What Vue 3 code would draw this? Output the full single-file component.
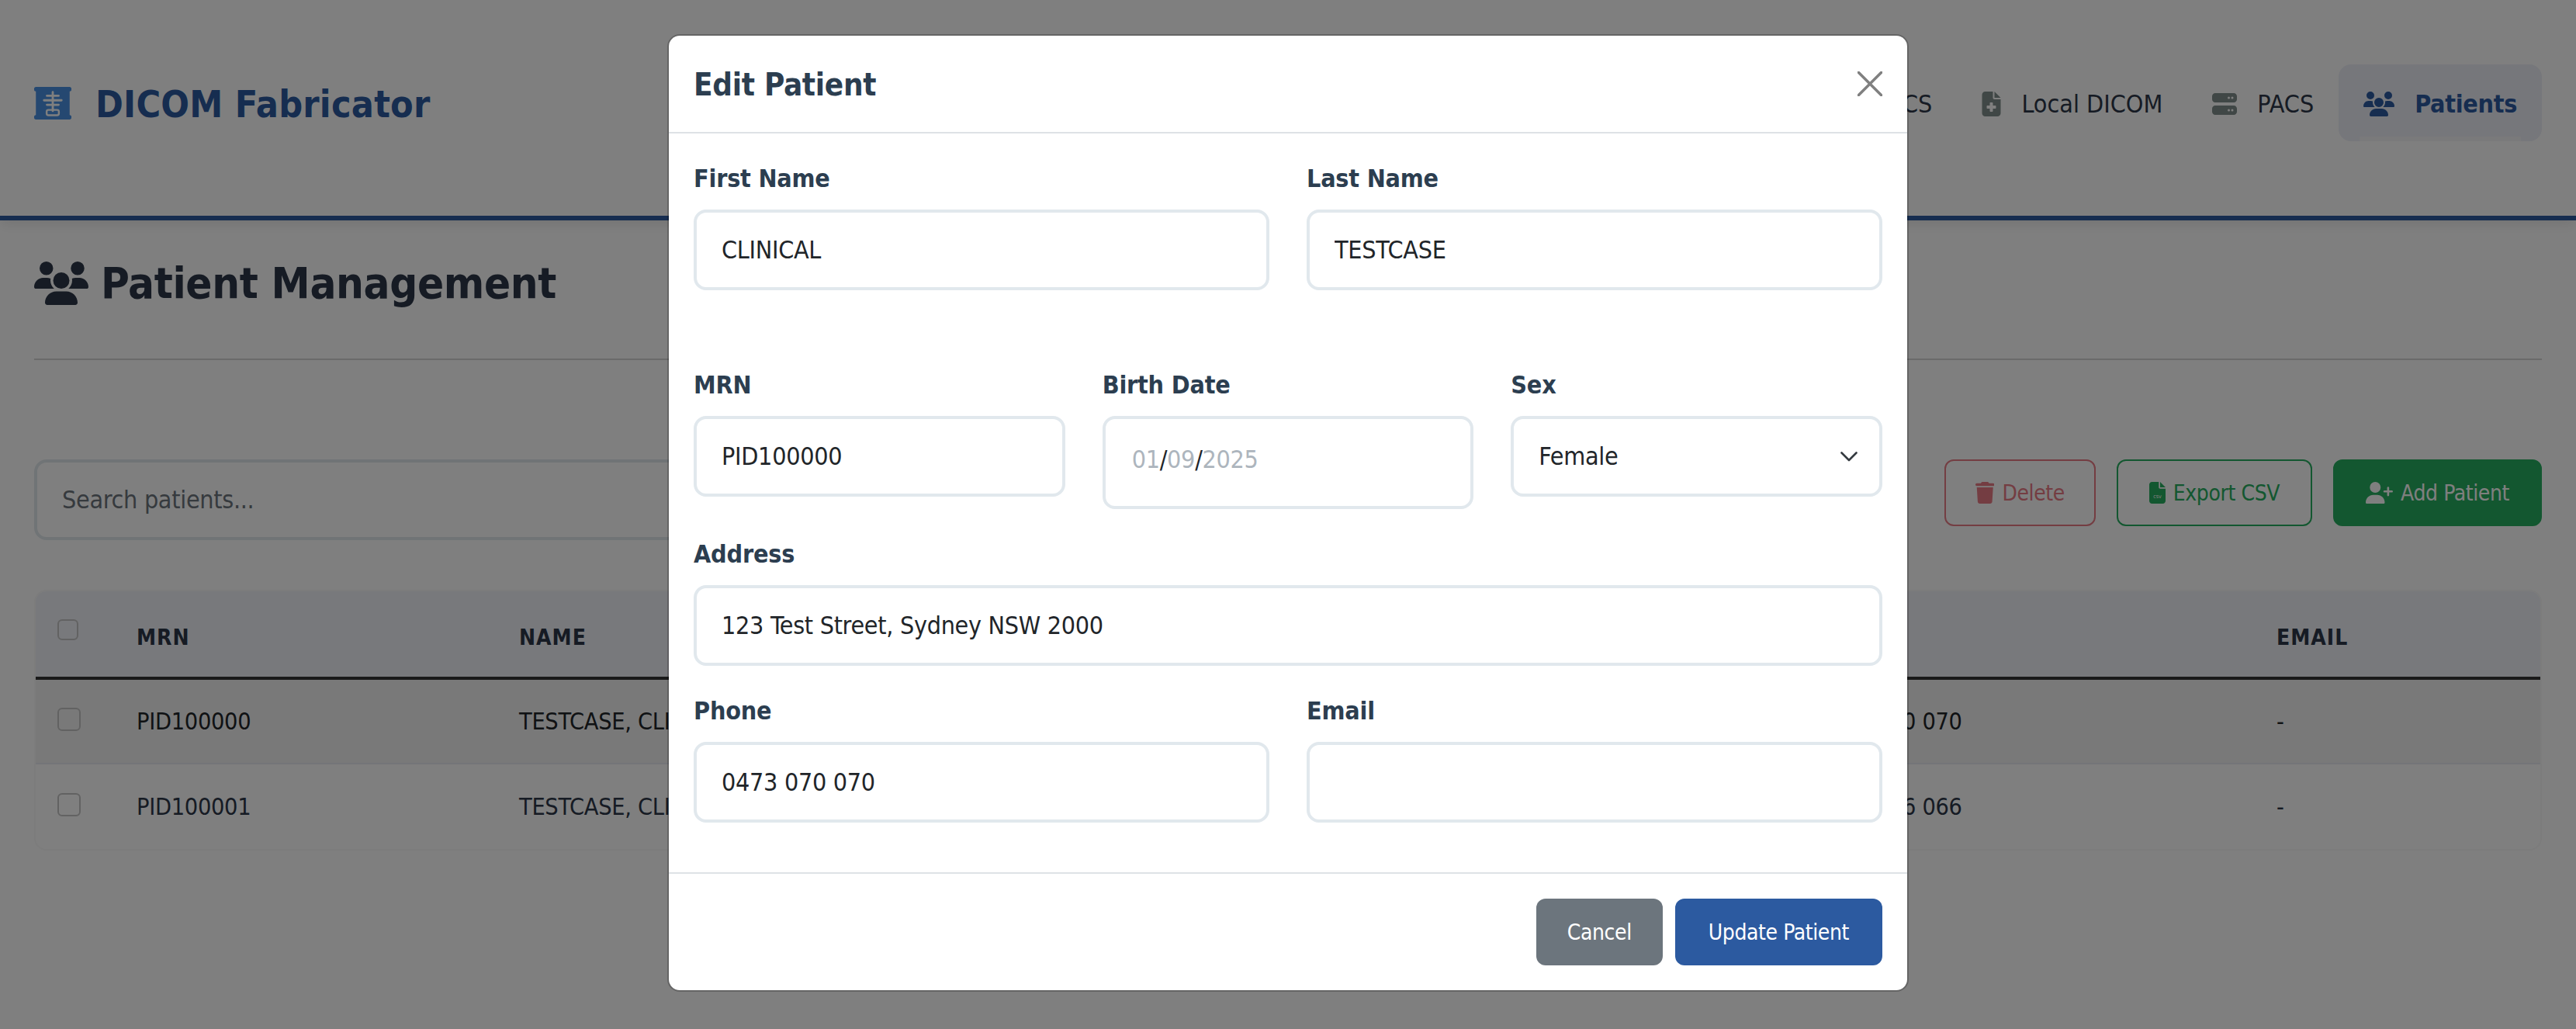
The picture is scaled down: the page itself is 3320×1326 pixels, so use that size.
<template>
  <div class="page">
    <!-- 顶部导航 -->
    <header class="navbar">
      <div class="brand">
        <svg class="brand-icon" viewBox="0 0 512 448">
          <path d="M0 24C0 10 10 0 24 0H488c14 0 24 10 24 24V40c0 12-8 20-24 22V386c16 2 24 10 24 22v16c0 14-10 24-24 24H24C10 448 0 438 0 424V408c0-12 8-20 24-22V62C8 60 0 52 0 40Z" />
          <path class="xray-bone" d="M256 72V330M176 122H336M136 184H376M176 246H336" />
          <path class="xray-bone thin" d="M196 316H316C330 316 340 326 340 340V366C340 380 330 390 316 390H196C182 390 172 380 172 366V340C172 326 182 316 196 316Z" />
        </svg>
        <span class="brand-name">DICOM Fabricator</span>
      </div>
      <nav class="nav-links">
        <a class="nav-link">Query PACS</a>
        <a class="nav-link">
          <svg class="nav-icon file" viewBox="0 0 384 512"><path :d="ICONS.fileMedical" /></svg>
          Local DICOM
        </a>
        <a class="nav-link">
          <svg class="nav-icon server" viewBox="0 0 512 512"><path :d="ICONS.server" /></svg>
          PACS
        </a>
        <a class="nav-link active">
          <svg class="nav-icon users" viewBox="0 0 640 512"><path :d="ICONS.users" /></svg>
          Patients
        </a>
      </nav>
    </header>

    <main class="content">
      <div class="page-head">
        <svg class="title-icon" viewBox="0 0 640 512"><path :d="ICONS.users" /></svg>
        <h1>Patient Management</h1>
      </div>

      <div class="toolbar">
        <input class="search" placeholder="Search patients..." />
        <div class="actions">
          <button class="btn btn-delete">
            <svg class="btn-icon" viewBox="0 0 448 512"><path :d="ICONS.trash" /></svg>
            Delete
          </button>
          <button class="btn btn-export">
            <svg class="btn-icon" viewBox="0 0 384 512">
              <path :d="ICONS.file" />
              <text x="192" y="390" class="csv-mark">csv</text>
            </svg>
            Export CSV
          </button>
          <button class="btn btn-add">
            <svg class="btn-icon" viewBox="0 0 640 512"><path :d="ICONS.userPlus" /></svg>
            Add Patient
          </button>
        </div>
      </div>

      <div class="table-wrap">
        <table>
          <colgroup>
            <col class="c-check" /><col class="c-mrn" /><col class="c-name" />
            <col class="c-dob" /><col class="c-sex" /><col class="c-phone" /><col />
          </colgroup>
          <thead>
            <tr>
              <th><input type="checkbox" class="check head-check" /></th>
              <th>MRN</th>
              <th>Name</th>
              <th>Birth Date</th>
              <th>Sex</th>
              <th>Phone</th>
              <th>Email</th>
            </tr>
          </thead>
          <tbody>
            <tr v-for="row in patients" :key="row.mrn">
              <td><input type="checkbox" class="check" /></td>
              <td>{{ row.mrn }}</td>
              <td>{{ row.name }}</td>
              <td>01/09/2025</td>
              <td>Female</td>
              <td>{{ row.phone }}</td>
              <td>-</td>
            </tr>
          </tbody>
        </table>
      </div>
    </main>

    <!-- 编辑弹窗 -->
    <div class="overlay">
      <div class="modal">
        <div class="modal-header">
          <h2>Edit Patient</h2>
          <svg class="close" viewBox="0 0 32 32"><path d="M1 1L31 31M31 1L1 31" /></svg>
        </div>

        <div class="modal-body">
          <div class="form-row two first">
            <div class="group">
              <label>First Name</label>
              <input class="field" :value="form.firstName" />
            </div>
            <div class="group">
              <label>Last Name</label>
              <input class="field" :value="form.lastName" />
            </div>
          </div>

          <div class="form-row three">
            <div class="group">
              <label>MRN</label>
              <input class="field" :value="form.mrn" />
            </div>
            <div class="group">
              <label>Birth Date</label>
              <div class="field date">
                <span class="muted">01</span>/<span class="muted">09</span>/<span class="muted">2025</span>
              </div>
            </div>
            <div class="group">
              <label>Sex</label>
              <div class="select-box">
                <select class="field">
                  <option>Female</option>
                  <option>Male</option>
                </select>
                <svg class="chevron" viewBox="0 0 22 13"><path d="M1.5 1.5L11 11L20.5 1.5" /></svg>
              </div>
            </div>
          </div>

          <div class="group">
            <label>Address</label>
            <input class="field" :value="form.address" />
          </div>

          <div class="form-row two">
            <div class="group">
              <label>Phone</label>
              <input class="field" :value="form.phone" />
            </div>
            <div class="group">
              <label>Email</label>
              <input class="field" :value="form.email" />
            </div>
          </div>
        </div>

        <div class="modal-footer">
          <button class="btn btn-cancel">Cancel</button>
          <button class="btn btn-update">Update Patient</button>
        </div>
      </div>
    </div>
  </div>
</template>

<script setup>
import { reactive } from 'vue'

const ICONS = {
  users: 'M144 0a80 80 0 1 1 0 160A80 80 0 1 1 144 0zM512 0a80 80 0 1 1 0 160A80 80 0 1 1 512 0zM0 298.7C0 239.8 47.8 192 106.7 192h42.7c15.9 0 31 3.5 44.6 9.7c-1.3 7.2-1.9 14.7-1.9 22.3c0 38.2 16.8 72.5 43.3 96c-.2 0-.4 0-.7 0H21.3C9.6 320 0 310.4 0 298.7zM405.3 320c-.2 0-.4 0-.7 0c26.6-23.5 43.3-57.8 43.3-96c0-7.6-.7-15-1.9-22.3c13.6-6.3 28.7-9.7 44.6-9.7h42.7C592.2 192 640 239.8 640 298.7c0 11.8-9.6 21.3-21.3 21.3H405.3zM224 224a96 96 0 1 1 192 0 96 96 0 1 1 -192 0zM128 485.3C128 411.7 187.7 352 261.3 352H378.7C452.3 352 512 411.7 512 485.3c0 14.7-11.9 26.7-26.7 26.7H154.7c-14.7 0-26.7-11.9-26.7-26.7z',
  fileMedical: 'M64 0C28.7 0 0 28.7 0 64V448c0 35.3 28.7 64 64 64H320c35.3 0 64-28.7 64-64V160H256c-17.7 0-32-14.3-32-32V0H64zM256 0V128H384L256 0zM160 240c0-8.8 7.2-16 16-16h32c8.8 0 16 7.2 16 16v48h48c8.8 0 16 7.2 16 16v32c0 8.8-7.2 16-16 16H224v48c0 8.8-7.2 16-16 16H176c-8.8 0-16-7.2-16-16V352H112c-8.8 0-16-7.2-16-16V304c0-8.8 7.2-16 16-16h48V240z',
  server: 'M64 32C28.7 32 0 60.7 0 96v64c0 35.3 28.7 64 64 64H448c35.3 0 64-28.7 64-64V96c0-35.3-28.7-64-64-64H64zm280 72a24 24 0 1 1 0 48 24 24 0 1 1 0-48zm48 24a24 24 0 1 1 48 0 24 24 0 1 1 -48 0zM64 288c-35.3 0-64 28.7-64 64v64c0 35.3 28.7 64 64 64H448c35.3 0 64-28.7 64-64V352c0-35.3-28.7-64-64-64H64zm280 72a24 24 0 1 1 0 48 24 24 0 1 1 0-48zm48 24a24 24 0 1 1 48 0 24 24 0 1 1 -48 0z',
  trash: 'M135.2 17.7L128 32H32C14.3 32 0 46.3 0 64S14.3 96 32 96H416c17.7 0 32-14.3 32-32s-14.3-32-32-32H320l-7.2-14.3C307.4 6.8 296.3 0 284.2 0H163.8c-12.1 0-23.2 6.8-28.6 17.7zM416 128H32L53.2 467c1.6 25.3 22.6 45 47.9 45H346.9c25.3 0 46.3-19.7 47.9-45L416 128z',
  file: 'M64 0C28.7 0 0 28.7 0 64V448c0 35.3 28.7 64 64 64H320c35.3 0 64-28.7 64-64V160H256c-17.7 0-32-14.3-32-32V0H64zM256 0V128H384L256 0z',
  userPlus: 'M96 128a128 128 0 1 1 256 0A128 128 0 1 1 96 128zM0 482.3C0 383.8 79.8 304 178.3 304h91.4C368.2 304 448 383.8 448 482.3c0 16.4-13.3 29.7-29.7 29.7H29.7C13.3 512 0 498.7 0 482.3zM504 312V248H440c-13.3 0-24-10.7-24-24s10.7-24 24-24h64V136c0-13.3 10.7-24 24-24s24 10.7 24 24v64h64c13.3 0 24 10.7 24 24s-10.7 24-24 24H552v64c0 13.3-10.7 24-24 24s-24-10.7-24-24z',
}

const patients = [
  { mrn: 'PID100000', name: 'TESTCASE, CLINICAL', phone: '0473 070 070' },
  { mrn: 'PID100001', name: 'TESTCASE, CLINICAL', phone: '0466 066 066' },
]

const form = reactive({
  firstName: 'CLINICAL',
  lastName: 'TESTCASE',
  mrn: 'PID100000',
  address: '123 Test Street, Sydney NSW 2000',
  phone: '0473 070 070',
  email: '',
})
</script>

<style>
html, body { margin: 0; background: #fff; }
</style>

<style scoped>
/* ============ 容器 ============ */
.page {
  position: relative;
  width: 3320px;
  height: 1326px;
  overflow: hidden;
  background: #fff;
  color: #212529;
  font-family: 'DejaVu Sans Condensed', 'DejaVu Sans', sans-serif;
  font-stretch: condensed;
  font-size: 32px;
  letter-spacing: -0.3px;
}

input, select, button {
  font: inherit;
  font-stretch: condensed;
  letter-spacing: inherit;
}

/* ============ 导航 ============ */
.navbar {
  display: flex;
  justify-content: space-between;
  align-items: flex-start;
  height: 284px;
  box-sizing: border-box;
  padding: 83px 44px 0;
  border-bottom: 6px solid #2c5aa0;
  box-shadow: 0 4px 16px rgba(0, 0, 0, 0.1);
}

.brand {
  display: flex;
  align-items: center;
  gap: 31px;
  height: 99px;
}

.brand-icon { width: 48px; height: 42px; fill: #4a90e2; }
.xray-bone { fill: none; stroke: #fff; stroke-width: 30; stroke-linecap: round; }
.xray-bone.thin { stroke-width: 26; }

.brand-name {
  padding-top: 2px;
  font-size: 48px;
  font-weight: 700;
  letter-spacing: 0.25px;
  color: #2c5aa0;
}

.nav-links { display: flex; }

.nav-link {
  position: relative;
  display: flex;
  align-items: center;
  gap: 26px;
  height: 99px;
  box-sizing: border-box;
  padding: 2px 32px 0;
  border-radius: 16px;
  letter-spacing: 0;
  color: #2d3748;
}

.nav-link.active {
  background: #eceef6;
  color: #2c5aa0;
  font-weight: 700;
  letter-spacing: -0.3px;
}

.nav-link.active::after {
  content: '';
  position: absolute;
  left: 27px;
  right: 27px;
  bottom: 0;
  height: 6px;
  background: #f4f4f6;
}

.nav-icon { height: 32px; fill: #808f8c; }
.nav-icon.file { width: 25px; }
.nav-icon.server { width: 32px; }
.nav-icon.users { width: 40px; fill: #2c5aa0; }

/* ============ 内容 ============ */
.content { padding: 47px 44px 0; }

.page-head {
  display: flex;
  align-items: center;
  gap: 16px;
  padding-bottom: 64px;
  border-bottom: 2px solid #d5d5d5;
}

.page-head h1 {
  margin: 0;
  font-size: 56px;
  line-height: 67px;
  font-weight: 700;
  letter-spacing: -0.35px;
  color: #2d3748;
}

.title-icon { width: 70px; height: 56px; fill: #2d3748; }

.toolbar {
  display: flex;
  align-items: flex-start;
  justify-content: space-between;
  margin-top: 128px;
}

.search {
  width: 2300px;
  height: 104px;
  box-sizing: border-box;
  padding: 0 32px;
  border: 4px solid #e1e8ed;
  border-radius: 16px;
  outline: none;
  color: #212529;
}

.search::placeholder { color: #6c757d; }

.actions { display: flex; gap: 27px; }

.btn {
  display: flex;
  align-items: center;
  gap: 10px;
  height: 86px;
  box-sizing: border-box;
  padding: 0 40px;
  border: 2px solid transparent;
  border-radius: 12px;
  font-size: 28px;
  letter-spacing: -0.4px;
  background: none;
}

.btn-icon { height: 28px; fill: currentColor; }
.csv-mark {
  fill: #fff;
  font-size: 130px;
  text-anchor: middle;
  letter-spacing: 0;
}

.btn-delete { padding: 0 38px; border-color: #dc3545; color: #dc3545; opacity: 0.65; }
.btn-export { border-color: #27ae60; color: #27ae60; }
.btn-add { background: #27ae60; border-color: #27ae60; color: #fff; }

/* ============ 表格 ============ */
.table-wrap {
  margin-top: 64px;
  border: 2px solid #f8f8f8;
  border-radius: 16px;
  overflow: hidden;
}

table {
  width: 100%;
  table-layout: fixed;
  border-collapse: collapse;
  font-size: 30.4px;
}

.c-check { width: 102px; }
.c-mrn { width: 493px; }
.c-name { width: 700px; }
.c-dob { width: 500px; }
.c-sex { width: 472px; }
.c-phone { width: 593px; }

th, td {
  padding: 0 28px;
  text-align: left;
  vertical-align: middle;
}

th {
  height: 112px;
  box-sizing: border-box;
  padding-top: 8px;
  background: #f0f2f8;
  border-bottom: 4px solid #343434;
  color: #2d3748;
  font-size: 28px;
  font-weight: 700;
  text-transform: uppercase;
  letter-spacing: 1px;
}

td {
  height: 110px;
  box-sizing: border-box;
  border-bottom: 2px solid #e8eaf0;
  color: #2d3748;
}

tbody tr:first-child td { background: #f2f2f2; color: #212529; }
tbody tr:last-child td { border-bottom: none; }

.check {
  appearance: none;
  display: block;
  width: 30px;
  height: 30px;
  box-sizing: border-box;
  margin: 0 0 6px;
  border: 2px solid #c4c4c4;
  border-radius: 6px;
  background: transparent;
}

.head-check {
  width: 27px;
  height: 27px;
  margin-bottom: 20px;
}

/* ============ 弹窗 ============ */
.overlay {
  position: absolute;
  inset: 0;
  display: flex;
  justify-content: center;
  align-items: flex-start;
  background: rgba(0, 0, 0, 0.5);
}

.modal {
  width: 1600px;
  margin-top: 44px;
  box-sizing: border-box;
  border: 2px solid rgba(0, 0, 0, 0.2);
  border-radius: 16px;
  background: #fff;
  background-clip: padding-box;
}

.modal-header {
  display: flex;
  align-items: center;
  justify-content: space-between;
  height: 126px;
  box-sizing: border-box;
  padding: 2px 32px 0;
  border-bottom: 2px solid #dee2e6;
}

.modal-header h2 {
  margin: 0;
  font-size: 40px;
  font-weight: 700;
  color: #2c3e50;
}

.close {
  width: 32px;
  height: 32px;
  margin-top: -2px;
  fill: none;
  stroke: #808080;
  stroke-width: 3.5;
  stroke-linecap: round;
}

.modal-body { padding: 32px 32px 32px; }

.form-row { display: grid; gap: 48px; }
.form-row.two { grid-template-columns: 1fr 1fr; }
.form-row.three { grid-template-columns: 1fr 1fr 1fr; align-items: start; }
.form-row.first { margin-bottom: 64px; }

.group { margin-bottom: 32px; min-width: 0; }

label {
  display: block;
  height: 50px;
  box-sizing: border-box;
  padding-top: 2px;
  margin-bottom: 16px;
  line-height: 48px;
  font-weight: 700;
  letter-spacing: -0.2px;
  color: #2c3e50;
}

.field {
  display: block;
  width: 100%;
  height: 104px;
  box-sizing: border-box;
  padding: 0 32px;
  border: 4px solid #e1e8ed;
  border-radius: 16px;
  outline: none;
  background: #fff;
  color: #212529;
}

.field.date {
  height: 120px;
  padding: 28px 32px 0 34px;
  line-height: 48px;
}

.muted { color: #adb5bd; }

select.field { appearance: none; }

.select-box { position: relative; }

.chevron {
  position: absolute;
  right: 32px;
  top: 46px;
  width: 22px;
  height: 13px;
  fill: none;
  stroke: #343a40;
  stroke-width: 2.6;
  stroke-linecap: round;
  stroke-linejoin: round;
}

.modal-footer {
  display: flex;
  justify-content: flex-end;
  gap: 16px;
  padding: 32px;
  border-top: 2px solid #dee2e6;
}

.btn-cancel { padding: 0 38px; background: #6c757d; color: #fff; }
.btn-update { padding: 0 41px; background: #2c5aa0; color: #fff; }
</style>
